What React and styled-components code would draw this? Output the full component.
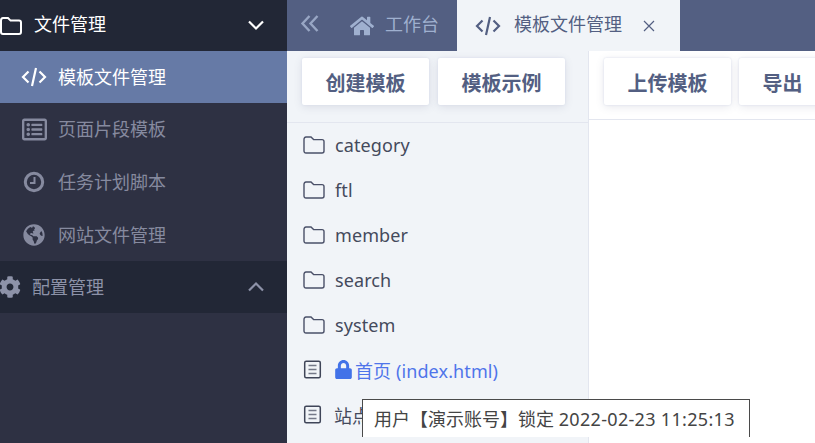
import React from "react"
import styled, { createGlobalStyle } from "styled-components"
import { FaCog, FaGlobeAmericas, FaHome, FaRegListAlt, FaLock } from "react-icons/fa"

const GlobalStyle = createGlobalStyle`
  html, body {
    margin: 0;
    height: 100%;
    overflow: hidden;
    font-family: "Noto Sans", "Noto Sans CJK SC", sans-serif;
  }
  #root { height: 100%; }
`

const CodeIcon = ({ size = 26 }) => (
  <svg width={size} height={size} viewBox="0 0 26 26" fill="none" stroke="currentColor" strokeWidth="2.2">
    <path d="M7.5 7.5 2 13l5.5 5.5M18.5 7.5 24 13l-5.5 5.5M15 4l-4 18" />
  </svg>
)

const FolderIcon = ({ size = 22, weight = 1.4 }) => (
  <svg width={size} height={(size * 18) / 22} viewBox="0 0 22 18" fill="none" stroke="currentColor" strokeWidth={weight}>
    <path d="M1 3.5c0-1.4.8-2.5 2-2.5h5l2.6 2.6H19c1.2 0 2 .8 2 2V15c0 1.2-.8 2-2 2H3c-1.2 0-2-.8-2-2z" />
  </svg>
)

const ClockIcon = () => (
  <svg width="22" height="22" viewBox="0 0 22 22" fill="none" stroke="currentColor">
    <circle cx="11" cy="11" r="8.7" strokeWidth="3" />
    <path d="M11.5 6v6H7" strokeWidth="2" />
  </svg>
)

const PageIcon = () => (
  <svg width="19" height="19" viewBox="0 0 19 19" fill="none" stroke="currentColor">
    <rect x="1.7" y="1.2" width="15.6" height="16.6" rx="1.5" strokeWidth="1.5" />
    <path d="M5.5 5.5h8M5.5 9.5h8M5.5 13.5h8" strokeWidth="1.3" opacity=".7" />
  </svg>
)

const CloseIcon = () => (
  <svg width="12" height="12" viewBox="0 0 12 12" fill="none" stroke="currentColor" strokeWidth="1.2">
    <path d="M1 1l10 10M11 1 1 11" />
  </svg>
)

const Chevron = ({ up }) => (
  <svg width="18" height="11" viewBox="0 0 18 11" fill="none" stroke="currentColor" strokeWidth="2.2">
    <path d={up ? "M2 9.5 9 2.5l7 7" : "M2 1.5l7 7 7-7"} />
  </svg>
)

const DoubleLeft = () => (
  <svg width="20" height="20" viewBox="0 0 20 20" fill="none" stroke="currentColor" strokeWidth="2.4">
    <path d="M9.5 2 2.5 9.5l7 7.5M17.5 2l-7 7.5 7 7.5" />
  </svg>
)

const sideItems = [
  { label: "页面片段模板", icon: <FaRegListAlt size={25} /> },
  { label: "任务计划脚本", icon: <ClockIcon /> },
  { label: "网站文件管理", icon: <FaGlobeAmericas size={22} /> },
]

const folders = ["category", "ftl", "member", "search", "system"]

export default function App() {
  return (
    <>
      <GlobalStyle />
      <Page>
        <Sidebar>
          <GroupHeader $open>
            <GroupIcon><FolderIcon weight={2} /></GroupIcon>
            <GroupLabel $open>文件管理</GroupLabel>
            <Chevron />
          </GroupHeader>
          <SideItem $active>
            <SideIcon><CodeIcon /></SideIcon>
            <SideLabel>模板文件管理</SideLabel>
          </SideItem>
          {sideItems.map((item) => (
            <SideItem key={item.label}>
              <SideIcon>{item.icon}</SideIcon>
              <SideLabel>{item.label}</SideLabel>
            </SideItem>
          ))}
          <GroupHeader>
            <GroupIcon $small><FaCog size={22} /></GroupIcon>
            <GroupLabel>配置管理</GroupLabel>
            <Chevron up />
          </GroupHeader>
        </Sidebar>

        <Main>
          <TabBar>
            <Collapse><DoubleLeft /></Collapse>
            <Tab>
              <FaHome size={24} />
              <TabLabel>工作台</TabLabel>
            </Tab>
            <Tab $active>
              <CodeIcon />
              <TabLabel>模板文件管理</TabLabel>
              <CloseMark><CloseIcon /></CloseMark>
            </Tab>
          </TabBar>
          <Content>
            <TreePanel>
              <TreeToolbar>
                <ToolButton>创建模板</ToolButton>
                <ToolButton>模板示例</ToolButton>
              </TreeToolbar>
              <TreeList>
                {folders.map((name) => (
                  <TreeRow key={name}>
                    <TreeIcon $folder><FolderIcon /></TreeIcon>
                    {name}
                  </TreeRow>
                ))}
                <TreeRow $locked>
                  <TreeIcon><PageIcon /></TreeIcon>
                  <LockMark><FaLock size={19} /></LockMark>
                  首页 (index.html)
                </TreeRow>
                <TreeRow>
                  <TreeIcon><PageIcon /></TreeIcon>
                  站点地图
                </TreeRow>
              </TreeList>
            </TreePanel>
            <EditorPanel>
              <EditorToolbar>
                <ToolButton>上传模板</ToolButton>
                <ToolButton>导出</ToolButton>
              </EditorToolbar>
            </EditorPanel>
          </Content>
        </Main>
        <Tooltip>用户【演示账号】锁定 <Stamp>2022-02-23 11:25:13</Stamp></Tooltip>
      </Page>
    </>
  )
}

const Page = styled.div`
  position: relative;
  display: flex;
  width: 815px;
  height: 443px;
  overflow: hidden;
`
const Sidebar = styled.aside`
  width: 287px;
  flex: none;
  background: #2e3143;
`
const GroupHeader = styled.div`
  display: flex;
  align-items: center;
  height: ${(p) => (p.$open ? 51 : 52)}px;
  padding-right: 22px;
  background: #222736;
  color: ${(p) => (p.$open ? "#fff" : "#8d92a8")};
`
const GroupIcon = styled.span`
  display: flex;
  width: ${(p) => (p.$small ? 33 : 34)}px;
  margin-left: ${(p) => (p.$small ? -1 : 0)}px;
  flex: none;
`
const GroupLabel = styled.span`
  flex: 1;
  font-size: 18px;
  line-height: 24px;
  margin-bottom: ${(p) => (p.$open ? 3 : 0)}px;
  color: ${(p) => (p.$open ? "#fff" : "#8d92a8")};
`
const SideItem = styled.div`
  display: flex;
  align-items: center;
  height: ${(p) => (p.$active ? 52 : 52.67)}px;
  padding-left: 21px;
  font-size: 18px;
  color: ${(p) => (p.$active ? "#fff" : "#868a9f")};
  background: ${(p) => (p.$active ? "#667aa6" : "transparent")};
`
const SideLabel = styled.span`
  line-height: 24px;
`
const SideIcon = styled.span`
  display: flex;
  justify-content: center;
  width: 26px;
  margin-right: 11px;
  flex: none;
`
const Main = styled.main`
  flex: 1;
  min-width: 0;
  display: flex;
  flex-direction: column;
`
const TabBar = styled.div`
  display: flex;
  align-items: stretch;
  height: 51px;
  flex: none;
  background: #535f82;
`
const Collapse = styled.div`
  display: flex;
  align-items: center;
  width: 48px;
  padding: 0 0 4px 13px;
  box-sizing: border-box;
  color: #98a6c4;
`
const Tab = styled.div`
  display: flex;
  align-items: center;
  gap: ${(p) => (p.$active ? 13 : 11)}px;
  padding: ${(p) => (p.$active ? "0 25px 0 18px" : "0 18px 0 15px")};
  font-size: 18px;
  color: ${(p) => (p.$active ? "#535f82" : "#9fb0cf")};
  background: ${(p) => (p.$active ? "#f1f4f8" : "transparent")};
`
const TabLabel = styled.span`
  line-height: 24px;
  margin-bottom: 3px;
`
const CloseMark = styled.span`
  display: flex;
  margin-left: 8px;
`
const Content = styled.div`
  flex: 1;
  display: flex;
  min-height: 0;
`
const TreePanel = styled.section`
  width: 302px;
  flex: none;
  box-sizing: border-box;
  background: #f1f4f8;
  border-right: 1px solid #e3e6ef;
`
const TreeToolbar = styled.div`
  display: flex;
  gap: 9px;
  height: 72px;
  padding: 7px 0 0 15px;
  box-sizing: border-box;
  border-bottom: 1px solid #e3e6ef;
`
const EditorPanel = styled.section`
  flex: 1;
  min-width: 0;
  background: #fff;
`
const EditorToolbar = styled.div`
  display: flex;
  gap: 8px;
  height: 69px;
  padding: 7px 0 0 15px;
  box-sizing: border-box;
  border-bottom: 1px solid #e3e6ef;
  overflow: hidden;
`
const ToolButton = styled.div`
  display: flex;
  align-items: center;
  justify-content: center;
  flex: none;
  height: 47px;
  padding: 1px 23.5px 0;
  box-sizing: border-box;
  background: #fff;
  border-radius: 2px;
  font-size: 20px;
  font-weight: 700;
  color: #535f82;
  box-shadow: 0 0 2px #d5daea, 0 2px 8px rgba(83, 95, 130, 0.14);
`
const TreeList = styled.div`
  display: flex;
  flex-direction: column;
`
const TreeRow = styled.div`
  display: flex;
  align-items: center;
  height: 45px;
  padding: 0 0 2px 15px;
  box-sizing: border-box;
  font-size: 18px;
  letter-spacing: 0.1px;
  white-space: nowrap;
  color: ${(p) => (p.$locked ? "#4f74ea" : "#444a5c")};
`
const TreeIcon = styled.span`
  display: flex;
  width: ${(p) => (p.$folder ? 33 : 32)}px;
  flex: none;
  color: ${(p) => (p.$folder ? "#4a5068" : "#3f4558")};
  padding-left: 1px;
  box-sizing: border-box;
`
const LockMark = styled.span`
  display: flex;
  margin: 0 2px 0 0;
  color: #4272e8;
`
const Tooltip = styled.div`
  position: absolute;
  left: 362px;
  top: 399px;
  width: 388px;
  height: 38px;
  box-sizing: border-box;
  padding: 6px 0 0 11px;
  background: #fff;
  border: 1px solid #4a4a4a;
  border-bottom: 0;
  font-size: 18px;
  line-height: 26px;
  white-space: nowrap;
  color: #444;
`
const Stamp = styled.span`
  letter-spacing: 0.32px;
`
